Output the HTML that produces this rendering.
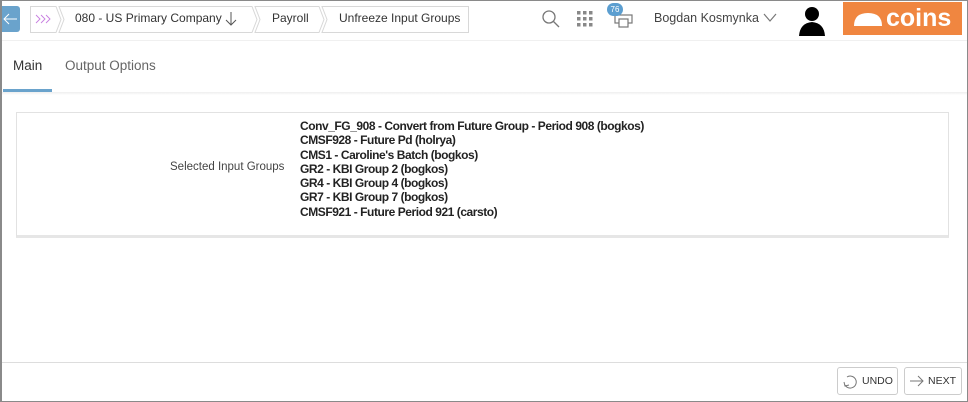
<!DOCTYPE html>
<html><head><style>
*{margin:0;padding:0;box-sizing:border-box}
body{width:968px;height:402px;overflow:hidden;background:#fff;font-family:"Liberation Sans",sans-serif;position:relative}
.frame{position:absolute;left:0;top:0;width:968px;height:402px;border:1px solid #8a8a8a;border-left:2px solid #8a8a8a}
.abs{position:absolute}
.ct{position:absolute;top:11px;font-size:12px;color:#333;white-space:nowrap}
</style></head><body>
<div class="abs" style="left:0;top:6px;width:20px;height:26px;background:#6aa3cc;border-radius:0 3px 3px 0"></div>
<svg class="abs" style="left:2px;top:12px" width="16" height="14"><line x1="2" y1="7" x2="15" y2="7" stroke="#fff" stroke-width="1"/><polyline points="7,2 2,7 7,12" fill="none" stroke="#fff"/></svg>
<svg class="abs" style="left:29px;top:5px" width="445" height="29" fill="none" stroke="#d8d8d8" stroke-width="1">
<polygon points="1.5,1.5 27,1.5 32,14.5 27,27.5 1.5,27.5"/>
<polygon points="30,1.5 223,1.5 228,14.5 223,27.5 30,27.5 35,14.5"/>
<polygon points="226,1.5 290,1.5 295,14.5 290,27.5 226,27.5 231,14.5"/>
<polygon points="293,1.5 439.5,1.5 439.5,27.5 293,27.5 298,14.5"/>
</svg>
<svg class="abs" style="left:35px;top:14px" width="18" height="10" fill="none" stroke="#c77ee0" stroke-width="0.9"><polyline points="1,1 5,5 1,9"/><polyline points="6,1 10,5 6,9"/><polyline points="11,1 15,5 11,9"/></svg>
<div class="ct" style="left:75px">080 - US Primary Company</div>
<svg class="abs" style="left:225px;top:11px" width="12" height="16" fill="none" stroke="#555" stroke-width="1"><line x1="6" y1="1" x2="6" y2="14"/><polyline points="1,9 6,14 11,9"/></svg>
<div class="ct" style="left:272px">Payroll</div>
<div class="ct" style="left:339px">Unfreeze Input Groups</div>
<svg class="abs" style="left:541px;top:9px" width="20" height="20"><circle cx="8" cy="8" r="6" fill="none" stroke="#777" stroke-width="1.3"/><line x1="12.5" y1="12.5" x2="18" y2="18" stroke="#777" stroke-width="1.3"/></svg>
<svg class="abs" style="left:577px;top:11px" width="16" height="16" fill="#888"><rect x="0" y="0" width="3.5" height="3.5"/><rect x="6" y="0" width="3.5" height="3.5"/><rect x="12" y="0" width="3.5" height="3.5"/><rect x="0" y="6" width="3.5" height="3.5"/><rect x="6" y="6" width="3.5" height="3.5"/><rect x="12" y="6" width="3.5" height="3.5"/><rect x="0" y="12" width="3.5" height="3.5"/><rect x="6" y="12" width="3.5" height="3.5"/><rect x="12" y="12" width="3.5" height="3.5"/></svg>
<svg class="abs" style="left:614px;top:10px" width="20" height="18"><rect x="1" y="5" width="17" height="8" fill="none" stroke="#777" stroke-width="1.2"/><rect x="5" y="9" width="9" height="8" fill="#fff" stroke="#777" stroke-width="1.2"/></svg>
<div class="abs" style="left:607px;top:3px;width:16px;height:13px;border-radius:7px;background:#5b9ed0;color:#fff;font-size:8px;line-height:13px;text-align:center">76</div>
<div class="abs" style="left:654px;top:11px;font-size:12.5px;color:#444">Bogdan Kosmynka</div>
<svg class="abs" style="left:763px;top:13px" width="14" height="10"><polyline points="1,1 7,8 13,1" fill="none" stroke="#777" stroke-width="1.2"/></svg>
<svg class="abs" style="left:797px;top:4px" width="30" height="32"><circle cx="15" cy="10" r="7" fill="#000"/><path d="M2 32 Q3 19 15 18 Q27 19 28 32 Z" fill="#000"/></svg>
<div class="abs" style="left:843px;top:2px;width:119px;height:33px;background:#f08640"></div>
<svg class="abs" style="left:852px;top:10px" width="32" height="18"><path d="M2 16 Q2 3 16 3 Q30 3 30 16 Z" fill="#fff"/></svg>
<div class="abs" style="left:886px;top:3px;color:#fff;font-size:25px;font-weight:bold;line-height:30px">coins</div>
<div class="abs" style="left:0;top:40px;width:968px;height:1px;background:#f0f0f0"></div>
<div class="abs" style="left:13px;top:58px;font-size:13.5px;color:#333">Main</div>
<div class="abs" style="left:65px;top:58px;font-size:13.5px;color:#666">Output Options</div>
<div class="abs" style="left:3px;top:89px;width:49px;height:3px;background:#6aa3cc"></div>
<div class="abs" style="left:0;top:92px;width:968px;height:3px;background:linear-gradient(#eee,#fff)"></div>
<div class="abs" style="left:16px;top:112px;width:933px;height:126px;border:1px solid #e2e2e2;border-bottom:3px solid #e6e6e6"></div>
<div class="abs" style="left:170px;top:161px;font-size:11.5px;color:#444">Selected Input Groups</div>
<div class="abs" style="left:300px;top:119px;font-size:12px;line-height:14.3px;color:#222;font-weight:bold;letter-spacing:-0.45px">Conv_FG_908 - Convert from Future Group - Period 908 (bogkos)<br>CMSF928 - Future Pd (holrya)<br>CMS1 - Caroline's Batch (bogkos)<br>GR2 - KBI Group 2 (bogkos)<br>GR4 - KBI Group 4 (bogkos)<br>GR7 - KBI Group 7 (bogkos)<br>CMSF921 - Future Period 921 (carsto)</div>
<div class="abs" style="left:0;top:362px;width:968px;height:1px;background:#ddd"></div>
<div class="abs" style="left:837px;top:367px;width:61px;height:28px;border:1px solid #ccc;border-radius:3px;font-size:10.5px;color:#333;line-height:26px;padding-left:24px">UNDO</div>
<svg class="abs" style="left:841px;top:373px" width="20" height="16"><path d="M6 4 A6 6 0 1 1 4 12" fill="none" stroke="#777"/><polyline points="3,9 4,13 8,12" fill="none" stroke="#777"/></svg>
<div class="abs" style="left:904px;top:367px;width:58px;height:28px;border:1px solid #ccc;border-radius:3px;font-size:10.5px;color:#333;line-height:26px;padding-left:23px">NEXT</div>
<svg class="abs" style="left:909px;top:375px" width="16" height="12"><line x1="1" y1="6" x2="14" y2="6" stroke="#777"/><polyline points="9,1 14,6 9,11" fill="none" stroke="#777"/></svg>
<div class="frame"></div>
</body></html>
